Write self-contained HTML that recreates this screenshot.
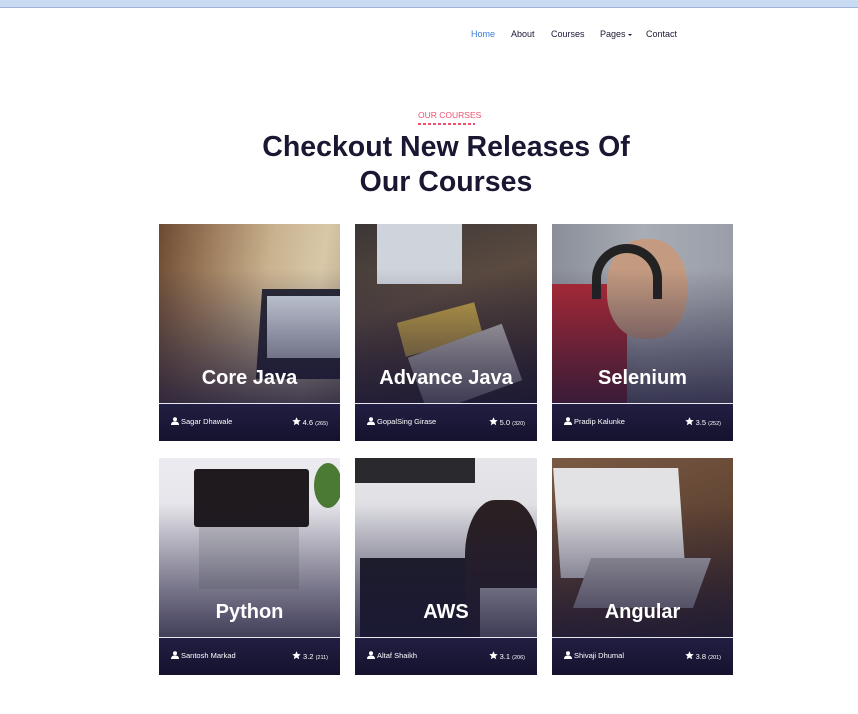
<!DOCTYPE html>
<html><head><meta charset="utf-8"><style>
*{margin:0;padding:0;box-sizing:border-box}
body{width:858px;height:714px;background:#fff;font-family:"Liberation Sans",sans-serif;position:relative;overflow:hidden}
.top{position:absolute;left:0;top:0;width:858px;height:8px;background:#c9daf3;border-bottom:1px solid #9fb3d6}
.nav{position:absolute;top:29px;left:471px;font-size:9px;color:#1a1733}
.nav span{position:absolute;white-space:nowrap}
.sub{position:absolute;top:110px;left:418px;width:57px;text-align:center;font-size:8.5px;color:#f0506e;white-space:nowrap}
.dash{position:absolute;top:123px;left:418px;width:57px;height:1.5px;background:repeating-linear-gradient(90deg,#f0506e 0 3px,transparent 3px 5px)}
h1{position:absolute;top:130px;left:-412px;width:1716px;text-align:center;font-size:28.5px;line-height:35px;color:#1a1733;font-weight:bold}
.card{position:absolute;width:181px;height:217px;overflow:hidden;background:#1b1838}
.img{position:absolute;left:0;top:0;width:100%;height:180px}
.ov{position:absolute;left:0;top:0;width:100%;height:180px;background:linear-gradient(to bottom,rgba(27,24,56,0) 25%,rgba(27,24,56,.55) 75%,rgba(27,24,56,.8))}
.t{position:absolute;top:143px;width:100%;text-align:center;color:#fff;font-weight:bold;font-size:20px}
.line{position:absolute;top:179px;left:0;width:100%;height:1px;background:#e8e8f0}
.ft{position:absolute;top:180px;left:0;width:100%;height:37px;background:linear-gradient(#221e42,#15122e)}
.au{position:absolute;left:12px;top:13px;color:#fff;font-size:7.5px;white-space:nowrap}
.rt{position:absolute;right:12px;top:13px;color:#fff;font-size:7.5px;white-space:nowrap}
.au svg,.rt svg{vertical-align:-1px;margin-right:2px}
.rt small{font-size:5.5px}
</style></head><body>
<div class="top"></div>
<div class="nav">
<span style="left:0;color:#3a7bd5">Home</span>
<span style="left:40px">About</span>
<span style="left:80px">Courses</span>
<span style="left:129px">Pages <i style="display:inline-block;border-left:2px solid transparent;border-right:2px solid transparent;border-top:2px solid #1a1733;vertical-align:middle"></i></span>
<span style="left:175px">Contact</span>
</div>
<div class="sub">OUR COURSES</div>
<div class="dash"></div>
<h1>Checkout New Releases Of<br>Our Courses</h1>

<div class="card" style="left:159px;top:224px">
 <div class="img" style="background:linear-gradient(100deg,#6b4a32 0%,#9b7a5a 25%,#c9b28e 55%,#d8c8a8 80%,#b8a688)"></div>
 <div style="position:absolute;left:100px;top:65px;width:85px;height:90px;background:#2a2a35;transform:skewX(-4deg)"></div>
 <div style="position:absolute;left:108px;top:72px;width:75px;height:62px;background:#d8dfe8"></div>
 <div class="ov"></div><div class="t">Core Java</div><div class="line"></div>
 <div class="ft"><div class="au"><svg width="8" height="8" viewBox="0 0 8 8"><circle cx="4" cy="2.2" r="2" fill="#fff"/><path d="M0 8C0 5 2 4.5 4 4.5S8 5 8 8Z" fill="#fff"/></svg>Sagar Dhawale</div><div class="rt"><svg width="9" height="9" viewBox="0 0 10 10"><path d="M5 .3l1.4 3 3.3.3-2.5 2.2.8 3.3L5 7.4 2 9.1l.8-3.3L.3 3.6l3.3-.3z" fill="#fff"/></svg>4.6 <small>(265)</small></div></div>
</div>

<div class="card" style="left:355px;top:224px;width:182px">
 <div class="img" style="background:linear-gradient(160deg,#3b3636 0%,#5a4a40 40%,#4a3a34 70%,#2a2226)"></div>
 <div style="position:absolute;left:22px;top:0;width:85px;height:60px;background:#cfd4dc"></div>
 <div style="position:absolute;left:45px;top:88px;width:80px;height:35px;background:#c8a848;transform:rotate(-15deg)"></div>
 <div style="position:absolute;left:60px;top:115px;width:100px;height:60px;background:#c8c4c0;transform:rotate(-20deg)"></div>
 <div class="ov"></div><div class="t">Advance Java</div><div class="line"></div>
 <div class="ft"><div class="au"><svg width="8" height="8" viewBox="0 0 8 8"><circle cx="4" cy="2.2" r="2" fill="#fff"/><path d="M0 8C0 5 2 4.5 4 4.5S8 5 8 8Z" fill="#fff"/></svg>GopalSing Girase</div><div class="rt"><svg width="9" height="9" viewBox="0 0 10 10"><path d="M5 .3l1.4 3 3.3.3-2.5 2.2.8 3.3L5 7.4 2 9.1l.8-3.3L.3 3.6l3.3-.3z" fill="#fff"/></svg>5.0 <small>(320)</small></div></div>
</div>

<div class="card" style="left:552px;top:224px">
 <div class="img" style="background:linear-gradient(90deg,#8a8e98,#a8acb4 50%,#9a9ea8)"></div>
 <div style="position:absolute;left:0;top:60px;width:75px;height:120px;background:#b02a36"></div>
 <div style="position:absolute;left:55px;top:15px;width:80px;height:100px;border-radius:45%;background:#c49a80"></div>
 <div style="position:absolute;left:40px;top:20px;width:70px;height:55px;border:9px solid #222;border-bottom:none;border-radius:40px 40px 0 0"></div>
 <div class="ov"></div><div class="t">Selenium</div><div class="line"></div>
 <div class="ft"><div class="au"><svg width="8" height="8" viewBox="0 0 8 8"><circle cx="4" cy="2.2" r="2" fill="#fff"/><path d="M0 8C0 5 2 4.5 4 4.5S8 5 8 8Z" fill="#fff"/></svg>Pradip Kalunke</div><div class="rt"><svg width="9" height="9" viewBox="0 0 10 10"><path d="M5 .3l1.4 3 3.3.3-2.5 2.2.8 3.3L5 7.4 2 9.1l.8-3.3L.3 3.6l3.3-.3z" fill="#fff"/></svg>3.5 <small>(252)</small></div></div>
</div>

<div class="card" style="left:159px;top:458px">
 <div class="img" style="background:linear-gradient(180deg,#ecebf0,#d8d6de)"></div>
 <div style="position:absolute;left:35px;top:11px;width:115px;height:58px;background:#1e1a1e;border-radius:3px"></div>
 <div style="position:absolute;left:40px;top:69px;width:100px;height:62px;background:#c8c8cc"></div>
 <div style="position:absolute;left:155px;top:5px;width:28px;height:45px;background:#4a7a34;border-radius:50%"></div>
 <div class="ov"></div><div class="t">Python</div><div class="line"></div>
 <div class="ft"><div class="au"><svg width="8" height="8" viewBox="0 0 8 8"><circle cx="4" cy="2.2" r="2" fill="#fff"/><path d="M0 8C0 5 2 4.5 4 4.5S8 5 8 8Z" fill="#fff"/></svg>Santosh Markad</div><div class="rt"><svg width="9" height="9" viewBox="0 0 10 10"><path d="M5 .3l1.4 3 3.3.3-2.5 2.2.8 3.3L5 7.4 2 9.1l.8-3.3L.3 3.6l3.3-.3z" fill="#fff"/></svg>3.2 <small>(211)</small></div></div>
</div>

<div class="card" style="left:355px;top:458px;width:182px">
 <div class="img" style="background:linear-gradient(180deg,#e6e6ea,#cfcfd6)"></div>
 <div style="position:absolute;left:0;top:0;width:120px;height:25px;background:#2a2a2e"></div>
 <div style="position:absolute;left:5px;top:100px;width:110px;height:80px;background:#1c1e26"></div>
 <div style="position:absolute;left:110px;top:42px;width:75px;height:138px;background:#2a2022;border-radius:40% 40% 0 0"></div>
 <div style="position:absolute;left:125px;top:130px;width:60px;height:50px;background:#c8c8cc"></div>
 <div class="ov"></div><div class="t">AWS</div><div class="line"></div>
 <div class="ft"><div class="au"><svg width="8" height="8" viewBox="0 0 8 8"><circle cx="4" cy="2.2" r="2" fill="#fff"/><path d="M0 8C0 5 2 4.5 4 4.5S8 5 8 8Z" fill="#fff"/></svg>Altaf Shaikh</div><div class="rt"><svg width="9" height="9" viewBox="0 0 10 10"><path d="M5 .3l1.4 3 3.3.3-2.5 2.2.8 3.3L5 7.4 2 9.1l.8-3.3L.3 3.6l3.3-.3z" fill="#fff"/></svg>3.1 <small>(206)</small></div></div>
</div>

<div class="card" style="left:552px;top:458px">
 <div class="img" style="background:linear-gradient(160deg,#7a5a44,#5a3e2e 60%,#3a2a22)"></div>
 <div style="position:absolute;left:5px;top:10px;width:125px;height:110px;background:#e2e2e4;transform:skewX(4deg)"></div>
 <div style="position:absolute;left:30px;top:100px;width:120px;height:50px;background:#b8b6b8;transform:skewX(-20deg)"></div>
 <div class="ov"></div><div class="t">Angular</div><div class="line"></div>
 <div class="ft"><div class="au"><svg width="8" height="8" viewBox="0 0 8 8"><circle cx="4" cy="2.2" r="2" fill="#fff"/><path d="M0 8C0 5 2 4.5 4 4.5S8 5 8 8Z" fill="#fff"/></svg>Shivaji Dhumal</div><div class="rt"><svg width="9" height="9" viewBox="0 0 10 10"><path d="M5 .3l1.4 3 3.3.3-2.5 2.2.8 3.3L5 7.4 2 9.1l.8-3.3L.3 3.6l3.3-.3z" fill="#fff"/></svg>3.8 <small>(201)</small></div></div>
</div>
</body></html>
